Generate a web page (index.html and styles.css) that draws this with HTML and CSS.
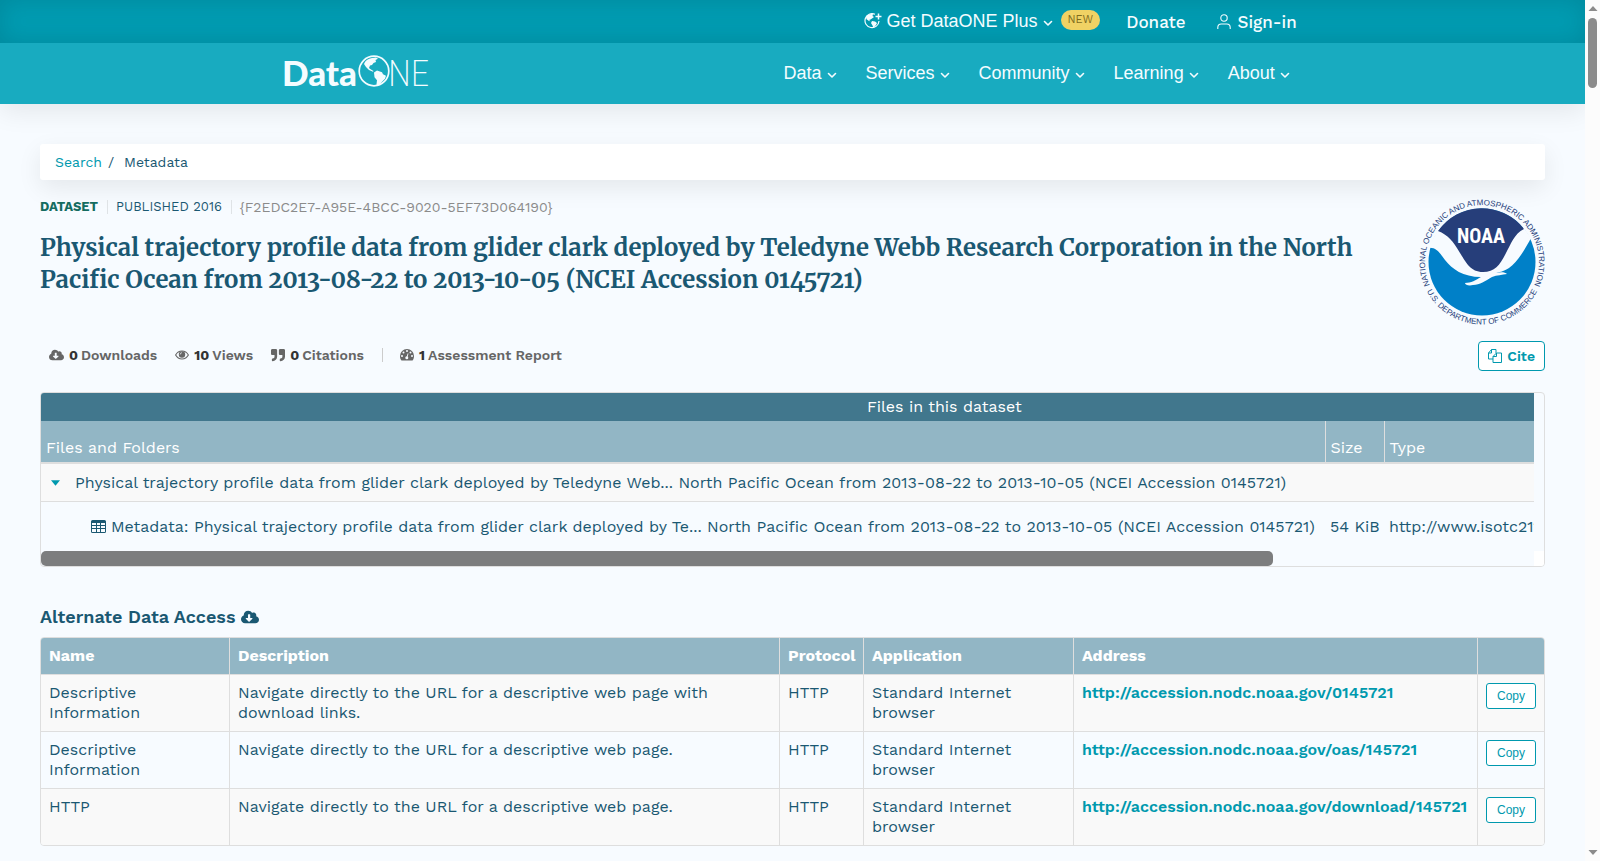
FILE: index.html
```html
<!DOCTYPE html>
<html lang="en">
<head>
  <meta charset="UTF-8">
  <meta name="viewport" content="width=device-width, initial-scale=1">
  <title>Physical trajectory profile data | DataONE</title>
  <link rel="stylesheet" href="styles.css">
</head>
<body>
  <!-- Shared icons -->
  <svg class="icon-defs" aria-hidden="true">
    <symbol id="chevron" viewBox="0 0 10 10"><path d="M1.5 3.5 5 7l3.5-3.5" fill="none" stroke="currentColor" stroke-width="1.6" stroke-linecap="round" stroke-linejoin="round"/></symbol>
    <symbol id="cloud" viewBox="0 0 640 512"><path fill="currentColor" d="M537.6 226.6c4.1-10.7 6.4-22.4 6.4-34.6 0-53-43-96-96-96-19.7 0-38.1 6-53.3 16.2C367 64.2 315.3 32 256 32c-88.4 0-160 71.6-160 160 0 2.7.1 5.4.2 8.1C40.2 219.8 0 273.2 0 336c0 79.5 64.5 144 144 144h368c70.7 0 128-57.3 128-128 0-61.9-44-113.6-102.4-125.4zm-132.9 88.7L299.3 420.7c-6.2 6.2-16.4 6.2-22.6 0L171.3 315.3c-10.1-10.1-2.9-27.3 11.3-27.3H248V176c0-8.8 7.2-16 16-16h48c8.8 0 16 7.2 16 16v112h65.4c14.2 0 21.4 17.2 11.3 27.3z"/></symbol>
  </svg>

  <div class="page">
    <header class="site-header">
      <div class="topbar">
        <div class="container top-links">
          <a href="#plus" class="plus-link">
            <svg class="globe" viewBox="0 0 18 16"><path d="M11 1.3A7 7 0 1 0 15 8" fill="none" stroke="currentColor" stroke-width="1.2"/><path d="M2 4c2-3 5-3.300 7-2.800L8.500 3 10 4 8 5.500 6.500 6.500 5 7l1.500 1.200L5 8 2.500 6.300zM8 8l3 .5 2 1.500-1 2-2.500 3-1-2.500L7 10z" fill="currentColor"/><path d="M14.500 0.500v6M11.500 3.500h6" stroke="currentColor" stroke-width="1.500"/></svg>
            Get DataONE Plus
            <svg class="chevron"><use href="#chevron"/></svg>
          </a>
          <span class="badge">NEW</span>
          <a href="#donate" class="donate">Donate</a>
          <a href="#signin" class="signin">
            <svg class="person" viewBox="0 0 14 16"><circle cx="7" cy="4" r="3.200" fill="none" stroke="currentColor" stroke-width="1.100"/><path d="M.8 15v-1.500c0-2.300 1.500-3.500 3.500-3.500h5.400c2 0 3.500 1.200 3.500 3.500V15" fill="none" stroke="currentColor" stroke-width="1.100"/></svg>
            Sign-in
          </a>
        </div>
      </div>
      <nav class="navbar">
        <div class="container nav-row">
          <a href="#home" class="logo" aria-label="DataONE">
            <svg viewBox="0 0 144 34">
              <text class="logo-bold" x="-3" y="31">Data</text>
              <circle cx="89" cy="16" r="14.800" fill="none" stroke="currentColor" stroke-width="1.700"/>
              <path fill="currentColor" d="M79 9c1-3 4-5.500 8-6l4-.5 2 1.300-2.500 1.200.5 2-2.500 1-1.500 2-2 .5-1 2.500 2 1.500 2.500 1.500-.5.800-4-1.800-3-3zM89 17.500l3-2 5 1.800 1 2 3 1.500-1 3-2.500 2.500-3.500 4-2 1-.5-2 .5-4-2.500-3z"/>
              <text class="logo-thin" x="103" y="31">NE</text>
            </svg>
          </a>
          <div class="nav-links">
            <a href="#data">Data <svg class="chevron"><use href="#chevron"/></svg></a>
            <a href="#services">Services <svg class="chevron"><use href="#chevron"/></svg></a>
            <a href="#community">Community <svg class="chevron"><use href="#chevron"/></svg></a>
            <a href="#learning">Learning <svg class="chevron"><use href="#chevron"/></svg></a>
            <a href="#about">About <svg class="chevron"><use href="#chevron"/></svg></a>
          </div>
        </div>
      </nav>
    </header>

    <main>
      <div class="breadcrumbs">
        <a href="#search">Search</a><span>/</span><span class="current">Metadata</span>
      </div>

      <!-- Dataset title and owner -->
      <section class="dataset-header">
        <div class="dataset-info">
          <div class="meta-line">
            <strong>DATASET</strong>
            <span class="published">PUBLISHED 2016</span>
            <span class="identifier">{F2EDC2E7-A95E-4BCC-9020-5EF73D064190}</span>
          </div>
          <h1>Physical trajectory profile data from glider clark deployed by Teledyne Webb Research Corporation in the North Pacific Ocean from 2013-08-22 to 2013-10-05 (NCEI Accession 0145721)</h1>
        </div>
        <svg class="noaa" viewBox="0 0 126 126" role="img" aria-label="NOAA">
          <defs>
            <path id="ringTop" d="M14.100 92.500A57 57 0 1 1 111.900 92.500"/>
            <path id="ringBottom" d="M.5 63A62.500 62.500 0 0 0 125.500 63"/>
          </defs>
          <circle cx="63" cy="63" r="53.500" fill="#0080c8"/>
          <path fill="#f7fbff" d="M9 49L19 31 105 29 112 39C104 54 98 63 90 69 84 73 80 73 76 74 82 73 86 73 88 75 83 76 78 76 73 78 66 82 61 86 54 86 50 87 46 86 46 84 52 84 57 81 62 78 44 78 33 70 26 61 20 53 17 48 9 49z"/>
          <path fill="#263e7a" d="M19 32A53.500 53.500 0 0 1 105 30C95 35 92 45 87 54 81 66 76 73 64 73 51 73 47 63 41 54 34 42 29 36 19 32z"/>
          <text class="noaa-name" x="62" y="44">NOAA</text>
          <text class="noaa-ring"><textPath href="#ringTop" startOffset="50%">NATIONAL OCEANIC AND ATMOSPHERIC ADMINISTRATION</textPath></text>
          <text class="noaa-ring"><textPath href="#ringBottom" startOffset="50%">U.S. DEPARTMENT OF COMMERCE</textPath></text>
        </svg>
      </section>

      <section class="stats-row">
        <ul class="stats">
          <li><svg class="stat-icon wide"><use href="#cloud"/></svg><b>0</b>Downloads</li>
          <li><svg class="stat-icon" viewBox="0 0 14 14"><path d="M.6 7C3.500 1.700 10.500 1.700 13.400 7 10.500 12.300 3.500 12.300.6 7z" fill="none" stroke="currentColor" stroke-width="1.100"/><circle cx="7" cy="6.500" r="3.200" fill="currentColor"/><path d="M5.200 6.500A1.800 1.800 0 0 1 7 4.700" fill="none" stroke="#f7fbff" stroke-width=".7"/></svg><b>10</b>Views</li>
          <li><svg class="stat-icon" viewBox="0 0 512 512"><path fill="currentColor" d="M464 32H336c-26.500 0-48 21.500-48 48v128c0 26.500 21.500 48 48 48h80v64c0 35.300-28.700 64-64 64h-8c-13.300 0-24 10.700-24 24v48c0 13.300 10.700 24 24 24h8c88.400 0 160-71.600 160-160V80c0-26.500-21.500-48-48-48zm-288 0H48C21.500 32 0 53.500 0 80v128c0 26.500 21.500 48 48 48h80v64c0 35.300-28.700 64-64 64h-8c-13.300 0-24 10.700-24 24v48c0 13.300 10.700 24 24 24h8c88.400 0 160-71.600 160-160V80c0-26.500-21.500-48-48-48z"/></svg><b>0</b>Citations</li>
          <li class="report"><svg class="stat-icon" viewBox="0 0 14 14"><path fill="currentColor" d="M7 1a7 7 0 0 0-7 7c0 1.600.4 3 1.100 4 .2.400.5.500.9.500h10c.4 0 .7-.1.900-.5.700-1 1.100-2.400 1.100-4a7 7 0 0 0-7-7z"/><g fill="#f7fbff"><circle cx="2" cy="8" r="1"/><circle cx="3.500" cy="4.500" r="1"/><circle cx="7" cy="3" r="1"/><circle cx="10.500" cy="4.500" r="1"/><circle cx="12" cy="8" r="1"/><circle cx="6.800" cy="9.800" r="1.500"/></g><path d="M7 9.500 8 5.500" stroke="#f7fbff" stroke-width=".9"/></svg><b>1</b>Assessment Report</li>
        </ul>
        <button type="button" class="cite">
          <svg viewBox="0 0 14 14"><path d="M5 10H.5V4L3.500.5H8V4M3.500.5V4H.5M5 7.500 8.500 4h5v9.500H5zM8.500 4v3.500H5" fill="none" stroke="currentColor"/></svg>
          Cite
        </button>
      </section>

      <!-- Files -->
      <section class="files-box">
        <div class="files-view">
          <table class="files">
            <caption>Files in this dataset</caption>
            <colgroup><col class="col-file"><col class="col-size"><col></colgroup>
            <thead>
              <tr><th>Files and Folders</th><th>Size</th><th>Type</th></tr>
            </thead>
            <tbody>
              <tr class="folder">
                <td colspan="3"><svg class="caret" viewBox="0 0 10 6"><path d="M0 0h10L5 6z" fill="currentColor"/></svg>Physical trajectory profile data from glider clark deployed by Teledyne Web... North Pacific Ocean from 2013-08-22 to 2013-10-05 (NCEI Accession 0145721)</td>
              </tr>
              <tr class="file">
                <td><svg class="grid-icon" viewBox="0 0 15 13"><path fill="currentColor" fill-rule="evenodd" d="M1.500 0h12A1.500 1.500 0 0 1 15 1.500v10a1.500 1.500 0 0 1-1.500 1.500h-12A1.500 1.500 0 0 1 0 11.500v-10A1.500 1.500 0 0 1 1.500 0zM1 3v2h4V3zm5 0v2h3V3zm4 0v2h4V3zM1 6v2h4V6zm5 0v2h3V6zm4 0v2h4V6zM1 9v3h4V9zm5 0v3h3V9zm4 0v3h4V9z"/></svg>Metadata: Physical trajectory profile data from glider clark deployed by Te... North Pacific Ocean from 2013-08-22 to 2013-10-05 (NCEI Accession 0145721)</td>
                <td>54 KiB</td>
                <td>http://www.isotc211.org/2005/gmd</td>
              </tr>
            </tbody>
          </table>
        </div>
        <div class="h-scroll"><div class="h-thumb"></div><div class="corner"></div></div>
      </section>

      <!-- Alternate access -->
      <section class="access">
        <h2>Alternate Data Access <svg><use href="#cloud"/></svg></h2>
        <table class="access-table">
          <colgroup><col class="c-name"><col><col class="c-protocol"><col class="c-app"><col class="c-address"><col class="c-copy"></colgroup>
          <thead>
            <tr><th>Name</th><th>Description</th><th>Protocol</th><th>Application</th><th>Address</th><th></th></tr>
          </thead>
          <tbody>
            <tr>
              <td>Descriptive Information</td>
              <td>Navigate directly to the URL for a descriptive web page with download links.</td>
              <td>HTTP</td>
              <td>Standard Internet browser</td>
              <td><a href="http://accession.nodc.noaa.gov/0145721">http://accession.nodc.noaa.gov/0145721</a></td>
              <td><button type="button" class="copy">Copy</button></td>
            </tr>
            <tr>
              <td>Descriptive Information</td>
              <td>Navigate directly to the URL for a descriptive web page.</td>
              <td>HTTP</td>
              <td>Standard Internet browser</td>
              <td><a href="http://accession.nodc.noaa.gov/oas/145721">http://accession.nodc.noaa.gov/oas/145721</a></td>
              <td><button type="button" class="copy">Copy</button></td>
            </tr>
            <tr>
              <td>HTTP</td>
              <td>Navigate directly to the URL for a descriptive web page.</td>
              <td>HTTP</td>
              <td>Standard Internet browser</td>
              <td><a href="http://accession.nodc.noaa.gov/download/145721">http://accession.nodc.noaa.gov/download/145721</a></td>
              <td><button type="button" class="copy">Copy</button></td>
            </tr>
          </tbody>
        </table>
      </section>
    </main>
  </div>

  <div class="scrollbar" aria-hidden="true">
    <svg viewBox="0 0 10 5"><path d="M5 0 9.500 5H.5z" fill="#8b8b8b"/></svg>
    <div class="thumb"></div>
    <svg viewBox="0 0 10 5"><path d="M5 5 9.500 0H.5z" fill="#8b8b8b"/></svg>
  </div>
</body>
</html>
```
FILE: styles.css
```css
* {
  box-sizing: border-box;
}

body {
  margin: 0;
  display: flex;
  min-height: 100vh;
  background: #f7fbff;
  color: #1a5872;
  font-family: "Work Sans", Inter, sans-serif;
  font-size: 16px;
  line-height: 20px;
}

a {
  color: #0099ae;
  text-decoration: none;
}

.icon-defs {
  position: absolute;
  width: 0;
  height: 0;
}

.page {
  flex: 1;
  min-width: 0;
}

/* Header */
.site-header {
  color: #fff;
  box-shadow: 0 8px 24px rgba(0, 0, 0, 0.08);
}

.site-header a {
  color: #f4fcff;
  display: flex;
  align-items: center;
  white-space: nowrap;
}

.container {
  width: 64%;
  margin: 0 auto;
  display: flex;
  align-items: center;
}

.topbar {
  background: #009cb2;
  box-shadow: inset 0 0 24px rgba(0, 60, 70, 0.2);
}

.top-links {
  height: 43px;
  justify-content: flex-end;
  padding-right: 3px;
}

.plus-link,
.nav-links {
  font-family: "Liberation Sans", Arial, sans-serif;
  font-size: 18px;
  padding-bottom: 2px;
}

.globe {
  width: 18px;
  height: 16px;
  margin-right: 4px;
}

.chevron {
  width: 10px;
  height: 10px;
  margin: 4px 0 0 5px;
}

.badge {
  background: #f0d264;
  color: #7d6a1c;
  border-radius: 10px;
  font-size: 11px;
  padding: 0 7px;
  margin: 0 26px 4px 8px;
}

.donate,
.signin {
  font-size: 17px;
  font-weight: 500;
}

.donate {
  margin-right: 31px;
}

.person {
  width: 14px;
  height: 16px;
  margin-right: 7px;
}

.navbar {
  background: #18abc0;
}

.nav-row {
  height: 61px;
  justify-content: space-between;
  padding-right: 10px;
}

.logo svg {
  width: 144px;
  height: 34px;
  margin-bottom: 4px;
  overflow: visible;
}

.logo text {
  fill: currentColor;
}

.logo .logo-bold {
  font-family: Lato, sans-serif;
  font-size: 35px;
  font-weight: 900;
}

.logo .logo-thin {
  font-family: "Roboto Condensed", "Open Sans Condensed", Lato, sans-serif;
  font-size: 37px;
  font-weight: 200;
}

.nav-links {
  display: flex;
  gap: 29px;
}

/* Main */
main {
  padding: 40px 40px 15px;
}

.breadcrumbs {
  display: flex;
  background: #fff;
  border-radius: 3px;
  padding: 8px 15px;
  font-size: 14px;
  box-shadow: 0 8px 24px rgba(0, 0, 0, 0.08);
}

.breadcrumbs span {
  margin-left: 6px;
}

.breadcrumbs .current {
  margin-left: 10px;
}

.dataset-header {
  display: flex;
  justify-content: space-between;
  gap: 60px;
  margin-top: 17px;
}

.meta-line {
  display: flex;
  align-items: center;
  font-size: 13px;
}

.meta-line strong {
  color: #146c60;
}

.published,
.identifier {
  border-left: 1px solid #dfe3e6;
  line-height: 14px;
  margin-left: 9px;
  padding-left: 8px;
}

.identifier {
  color: #8b8b8b;
  font-size: 14px;
}

h1 {
  font-family: Merriweather, "DejaVu Serif Condensed", "DejaVu Serif", serif;
  font-size: 24px;
  line-height: 32px;
  font-weight: bold;
  font-variant-numeric: oldstyle-nums;
  margin: 15px 0 0;
}

.noaa {
  flex: none;
  width: 126px;
  height: 126px;
  margin-top: 2px;
  overflow: visible;
}

.noaa text {
  text-anchor: middle;
}

.noaa-name {
  fill: #fff;
  font-family: "Roboto Condensed", "Liberation Sans Narrow", Roboto, sans-serif;
  font-size: 20px;
  font-weight: bold;
}

.noaa-ring {
  fill: #263e7a;
  font-family: "Liberation Sans", Arial, sans-serif;
  font-size: 8px;
}

/* Counts and cite button */
.stats-row {
  display: flex;
  align-items: center;
  justify-content: space-between;
  margin: 16px 0 21px;
}

.stats {
  list-style: none;
  display: flex;
  margin: 0;
  padding: 0 0 2px 9px;
  gap: 18px;
  color: #666;
  font-size: 14px;
  font-weight: 600;
}

.stats li {
  display: flex;
  align-items: center;
}

.stats b {
  color: #333;
  font-weight: 700;
  margin: 0 3px 0 5px;
}

.stat-icon {
  width: 14px;
  height: 14px;
}

.stat-icon.wide {
  width: 15px;
}

.report::before {
  content: '';
  border-left: 1px solid #ccc;
  height: 14px;
  margin-right: 17px;
}

.cite {
  display: flex;
  align-items: center;
  height: 30px;
  padding: 0 9px;
  gap: 5px;
  border: 1px solid #0099ae;
  border-radius: 4px;
  background: #fff;
  color: #0099ae;
  font: 600 14px "Work Sans", Inter, sans-serif;
}

.cite svg {
  width: 14px;
  height: 14px;
}

/* File table */
.files-box {
  border: 1px solid #dedede;
  border-radius: 4px;
  overflow: hidden;
}

.files-view {
  margin-right: 10px;
  overflow: hidden;
}

.files {
  width: 121%;
  table-layout: fixed;
  border-collapse: collapse;
  white-space: nowrap;
}

.files caption {
  background: #41778d;
  color: #fff;
  line-height: 28px;
}

.col-file {
  width: 1284px;
}

.col-size {
  width: 59px;
}

.files th {
  background: #92b6c5;
  color: #fff;
  font-weight: normal;
  text-align: left;
  vertical-align: bottom;
  padding: 17px 5px 4px;
  border-left: 1px solid #dedede;
  border-bottom: 2px solid #dedede;
}

.files th:first-child {
  border-left: 0;
}

.folder td {
  background: #f9f9f9;
  border-bottom: 1px solid #dedede;
  padding: 9px 10px 8px;
}

.file td {
  padding: 15px 5px 14px;
}

.file td:first-child {
  padding-left: 50px;
}

.caret {
  width: 9px;
  height: 6px;
  margin: 0 15px 2px 0;
  color: #0099ae;
}

.grid-icon {
  width: 15px;
  height: 13px;
  margin-right: 5px;
  vertical-align: -1px;
}

.h-scroll {
  display: flex;
  justify-content: space-between;
  height: 15px;
}

.h-thumb {
  width: 82%;
  background: #7c7d7e;
  border-radius: 5px;
}

.corner {
  width: 10px;
  background: #fff;
}

/* Alternate data access */
h2 {
  display: flex;
  align-items: center;
  gap: 6px;
  font-size: 18px;
  line-height: 20px;
  font-weight: 600;
  margin: 40px 0 10px;
}

h2 svg {
  width: 18px;
  height: 18px;
}

.access-table {
  width: 100%;
  table-layout: fixed;
  border: 1px solid #dedede;
  border-radius: 4px;
  border-collapse: separate;
  border-spacing: 0;
  overflow: hidden;
}

.c-name { width: 188px; }
.c-protocol { width: 84px; }
.c-app { width: 210px; }
.c-address { width: 404px; }
.c-copy { width: 67px; }

.access-table th,
.access-table td {
  text-align: left;
  vertical-align: top;
  padding: 8px;
  border-left: 1px solid #dedede;
}

.access-table td {
  border-top: 1px solid #dedede;
}

.access-table th:first-child,
.access-table td:first-child {
  border-left: 0;
}

.access-table th {
  background: #92b6c5;
  color: #fff;
  font-weight: bold;
}

.access-table tbody tr:nth-child(odd) {
  background: #f9f9f9;
}

.access-table a {
  font-weight: 600;
}

.copy {
  display: block;
  width: 50px;
  height: 26px;
  padding: 0;
  border: 1px solid #0099ae;
  border-radius: 3px;
  background: #fff;
  color: #0099ae;
  font: 12px "Liberation Sans", Arial, sans-serif;
}

/* Page scrollbar */
.scrollbar {
  flex: none;
  display: flex;
  flex-direction: column;
  align-items: center;
  width: 15px;
  padding: 6px 0;
  background: #fcfcfc;
}

.scrollbar svg {
  width: 10px;
  height: 5px;
}

.scrollbar .thumb {
  width: 9px;
  height: 70px;
  margin: 7px 0 auto;
  border-radius: 5px;
  background: #8b8b8b;
}
```
